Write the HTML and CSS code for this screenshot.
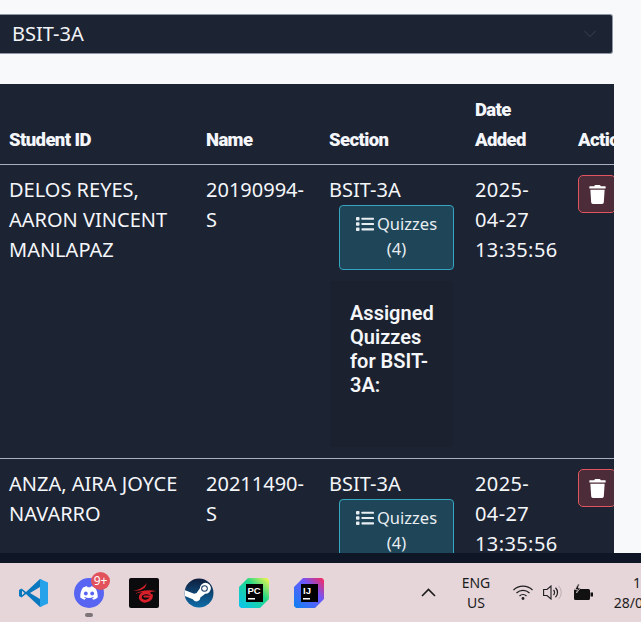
FILE: index.html
```html
<!DOCTYPE html>
<html lang="en">
<head>
  <meta charset="UTF-8">
  <meta name="viewport" content="width=device-width, initial-scale=1.0">
  <title>Students</title>
  <link rel="stylesheet" href="styles.css">
</head>
<body>
  <main class="page">
    <div class="section-select">
      <span>BSIT-3A</span>
      <svg class="chevron" width="14" height="14" viewBox="0 0 16 16"><path d="M2 5l6 6 6-6" fill="none" stroke="currentColor" stroke-width="1.6" stroke-linecap="round" stroke-linejoin="round"/></svg>
    </div>
    <div class="table-wrap">
      <table class="students">
        <colgroup>
          <col class="col-id"><col class="col-name"><col class="col-section"><col class="col-date"><col class="col-action">
        </colgroup>
        <thead>
          <tr>
            <th>Student ID</th>
            <th>Name</th>
            <th>Section</th>
            <th>Date Added</th>
            <th>Actions</th>
          </tr>
        </thead>
        <tbody>
          <tr>
            <td>DELOS REYES, AARON VINCENT MANLAPAZ</td>
            <td>20190994-S</td>
            <td>
              BSIT-3A
              <button class="quiz-btn">
                <svg class="list-icon" viewBox="0 0 18 16"><use href="#list"/></svg>Quizzes (4)
              </button>
              <div class="quiz-panel">
                <h5>Assigned Quizzes for BSIT-3A:</h5>
              </div>
            </td>
            <td class="date">2025-04-27 13:35:56</td>
            <td>
              <button class="del-btn"><svg class="trash-icon" viewBox="0 0 448 512"><use href="#trash"/></svg></button>
            </td>
          </tr>
          <tr>
            <td>ANZA, AIRA JOYCE NAVARRO</td>
            <td>20211490-S</td>
            <td>
              BSIT-3A
              <button class="quiz-btn">
                <svg class="list-icon" viewBox="0 0 18 16"><use href="#list"/></svg>Quizzes (4)
              </button>
            </td>
            <td class="date">2025-04-27 13:35:56</td>
            <td>
              <button class="del-btn"><svg class="trash-icon" viewBox="0 0 448 512"><use href="#trash"/></svg></button>
            </td>
          </tr>
        </tbody>
      </table>
    </div>
  </main>

  <div class="strip"></div>

  <footer class="taskbar">
    <div class="apps">
      <svg width="30" height="30" viewBox="0 0 30 30">
        <path d="M21 1L7 14 2.500 10.500 0 12v6l2.500 1.500L7 16l14 13 3-1.500V2.500z" fill="#0a78bf"/>
        <path d="M21 9L11 15l10 6z" fill="#e6d6da"/>
        <path d="M3 12.800L5.500 15 3 17.200z" fill="#e6d6da"/>
        <path d="M21 1l8 3.500v21L21 29z" fill="#25a2ea"/>
      </svg>
      <div class="discord">
        <svg width="30" height="30" viewBox="0 0 30 30">
          <circle cx="15" cy="15" r="15" fill="#5865f2"/>
          <path d="M9 9.500c2-1 3.500-1.300 4-1.300l.5 1c1-.1 2-.1 3 0l.5-1c.5 0 2 .3 4 1.300 2 3 3 6.500 2.700 10-1.500 1.200-3 1.900-4.500 2.300l-1-1.600 1.600-.8-.4-.3c-2.900 1.300-5.900 1.300-8.800 0l-.4.3 1.600.8-1 1.600c-1.500-.4-3-1.100-4.500-2.300-.3-3.500.7-7 2.700-10z" fill="#fff"/>
          <circle cx="11.800" cy="15.500" r="1.900" fill="#5865f2"/>
          <circle cx="18.200" cy="15.500" r="1.900" fill="#5865f2"/>
        </svg>
        <span class="badge">9+</span>
        <span class="running"></span>
      </div>
      <svg width="30" height="30" viewBox="0 0 30 30">
        <rect width="30" height="30" rx="2" fill="#0b0b0d"/>
        <path d="M4 12.500c5 0 9-2 14-7.500l-2 4.500c-3 2.500-7 4-12 3z" fill="#d9202a"/>
        <path d="M6 16c5-3.500 13-4.500 21-3-3 .6-5 1-7 1.300-5-.6-10 .2-14 1.700z" fill="#d9202a"/>
        <g fill="none" stroke="#d9202a" stroke-linecap="round">
          <path d="M20.500 15.500c-3-1.500-8-.5-9 2.500-1 3.500 2.500 6 6 5 3-.8 5-3 5-5.500" stroke-width="2.800"/>
          <path d="M15.500 18.500h5" stroke-width="2.200"/>
        </g>
      </svg>
      <svg width="30" height="30" viewBox="0 0 30 30">
        <defs>
          <linearGradient id="steamBg" x1="0" y1="0" x2="0" y2="1">
            <stop offset="0" stop-color="#0f1d3c"/>
            <stop offset="1" stop-color="#0e6da8"/>
          </linearGradient>
        </defs>
        <circle cx="15" cy="15" r="14.500" fill="url(#steamBg)"/>
        <path d="M.8 18l8 3.300a4 4 0 0 0 7.500-1.800l5-3.700a5.500 5.500 0 1 0-5.400-5.500l-3.500 5a4 4 0 0 0-2.300.4L.5 12z" fill="#fff"/>
        <circle cx="20.500" cy="10.500" r="3.300" fill="#1a3a63"/>
        <circle cx="20.500" cy="10.500" r="2.300" fill="#fff"/>
      </svg>
      <svg width="30" height="30" viewBox="0 0 30 30">
        <defs>
          <linearGradient id="pcBg" x1="0" y1="1" x2="1" y2="0">
            <stop offset="0" stop-color="#07c3f2"/>
            <stop offset="0.6" stop-color="#21d789"/>
            <stop offset="1" stop-color="#fcf84a"/>
          </linearGradient>
        </defs>
        <path d="M9 0h19l2 2v19l-9 9H2l-2-2V9z" fill="url(#pcBg)"/>
        <rect x="7" y="6" width="17" height="18" fill="#000"/>
        <text class="ide-text" x="8.500" y="15.500">PC</text>
        <rect x="9" y="20" width="7" height="1.500" fill="#fff"/>
      </svg>
      <svg width="30" height="30" viewBox="0 0 30 30">
        <defs>
          <linearGradient id="ijBg" x1="0" y1="1" x2="1" y2="0">
            <stop offset="0" stop-color="#0b82f0"/>
            <stop offset="0.6" stop-color="#6b57ff"/>
            <stop offset="1" stop-color="#fe2857"/>
          </linearGradient>
        </defs>
        <path d="M9 0h19l2 2v19l-9 9H2l-2-2V9z" fill="url(#ijBg)"/>
        <rect x="7" y="6" width="17" height="18" fill="#000"/>
        <text class="ide-text" x="9" y="15.500">IJ</text>
        <rect x="9" y="20" width="7" height="1.500" fill="#fff"/>
      </svg>
    </div>
    <div class="tray">
      <svg class="tray-chevron" width="15" height="9" viewBox="0 0 15 9"><path d="M1 8l6.500-6.500L14 8" fill="none" stroke="#1c1c1c" stroke-width="1.600"/></svg>
      <div class="lang">ENG<br>US</div>
      <svg class="wifi" width="20" height="15" viewBox="0 0 20 15">
        <g fill="none" stroke="#1e1e1e" stroke-width="1.200">
          <path d="M.5 5a13.800 13.800 0 0 1 19 0"/>
          <path d="M3.500 8a9.500 9.500 0 0 1 13 0"/>
          <path d="M6.500 11a5.200 5.200 0 0 1 7 0"/>
        </g>
        <circle cx="10" cy="13.500" r="1.400" fill="#1e1e1e"/>
      </svg>
      <svg class="volume" width="20" height="15" viewBox="0 0 20 15">
        <path d="M.6 4.500h3.400L8 1v13l-4-3.500H.6z" fill="none" stroke="#1e1e1e" stroke-width="1.100"/>
        <path d="M10.500 5a3.500 3.500 0 0 1 0 5M12.500 2.800a6.500 6.500 0 0 1 0 9.400" fill="none" stroke="#1e1e1e" stroke-width="1.200"/>
        <path d="M15.500.8a9.500 9.500 0 0 1 0 13.400" fill="none" stroke="#b9adb1" stroke-width="1"/>
      </svg>
      <svg class="battery" width="20" height="17" viewBox="0 0 20 17">
        <path d="M2.500 5h13A1.500 1.500 0 0 1 17 6.500v8a1.500 1.500 0 0 1-1.500 1.500h-13A1.500 1.500 0 0 1 1 14.500v-8A1.500 1.500 0 0 1 2.500 5z" fill="#111"/>
        <rect x="17.500" y="8.500" width="2.500" height="4" fill="#111"/>
        <path d="M5 0L2 5.500h2.500L3.500 9 7.500 4H5.200L6.500 0z" fill="#111" stroke="#e6d6da" stroke-width=".7"/>
      </svg>
      <div class="clock">13:40<br>28/04/2025</div>
    </div>
  </footer>

  <svg class="sprite" width="0" height="0">
    <symbol id="list" viewBox="0 0 18 16">
      <rect x="0" y="1" width="3.500" height="3.500" rx=".8"/>
      <rect x="0" y="6.300" width="3.500" height="3.500" rx=".8"/>
      <rect x="0" y="11.600" width="3.500" height="3.500" rx=".8"/>
      <rect x="5.500" y="1.700" width="12.500" height="2.100" rx=".6"/>
      <rect x="5.500" y="7" width="12.500" height="2.100" rx=".6"/>
      <rect x="5.500" y="12.300" width="12.500" height="2.100" rx=".6"/>
    </symbol>
    <symbol id="trash" viewBox="0 0 448 512">
      <path d="M432 32H312l-9.400-18.700A24 24 0 0 0 281.100 0H166.800a23.720 23.720 0 0 0-21.400 13.300L136 32H16A16 16 0 0 0 0 48v32a16 16 0 0 0 16 16h416a16 16 0 0 0 16-16V48a16 16 0 0 0-16-16zM53.200 467a48 48 0 0 0 47.900 45h245.800a48 48 0 0 0 47.900-45L416 128H32z"/>
    </symbol>
  </svg>
</body>
</html>
```

FILE: styles.css
```css
* {
  box-sizing: border-box;
}
body {
  margin: 0;
  height: 622px;
  display: flex;
  flex-direction: column;
  overflow: hidden;
  background: #f8f9fb;
  font-family: "Noto Sans", Roboto, sans-serif;
}
.page {
  height: 553px;
  padding-top: 14px;
  overflow: hidden;
}
.section-select {
  width: 613px;
  height: 40px;
  margin-bottom: 30px;
  padding: 0 15px 1px 12px;
  display: flex;
  align-items: center;
  justify-content: space-between;
  background: #1c2333;
  border: 1px solid #8f96a6;
  border-left: 0;
  border-radius: 0 3px 3px 0;
  color: #f2f4f8;
  font-size: 20px;
}
.chevron {
  color: #2f3748;
}
.table-wrap {
  width: 614px;
  overflow: hidden;
  background: #1c2333;
}
.students {
  width: 660px;
  table-layout: fixed;
  border-collapse: collapse;
  color: #f4f6fa;
  font-size: 20px;
  line-height: 30px;
}
.col-id { width: 197px; }
.col-name { width: 123px; }
.col-section { width: 146px; }
.col-date { width: 103px; }
.col-action { width: 91px; }
.students th {
  padding: 11px 9px 9px;
  text-align: left;
  vertical-align: bottom;
  font-family: Roboto, sans-serif;
  font-size: 18.5px;
  font-weight: 900;
  letter-spacing: -0.6px;
  border-bottom: 1px solid #a9afbd;
}
.students td {
  padding: 10px 9px;
  vertical-align: top;
  border-bottom: 1px solid #a9afbd;
}
.students td.date {
  padding-right: 11px;
  letter-spacing: 0.4px;
}
.quiz-btn {
  display: block;
  width: 115px;
  margin-left: 10px;
  padding: 5px 10px 8px;
  background: #1f4558;
  border: 1px solid #35a5c2;
  border-radius: 4px;
  color: #e9eef2;
  font-family: inherit;
  font-size: 16.5px;
  line-height: 25px;
  text-align: center;
}
.list-icon {
  width: 18px;
  height: 16px;
  margin-right: 3px;
  vertical-align: -2px;
  fill: #e9eef2;
}
.quiz-panel {
  width: 123px;
  height: 166px;
  margin: 11px 0 1px 1px;
  padding: 20px;
  background: #1b212f;
  border-radius: 4px;
}
.quiz-panel h5 {
  margin: 0;
  font-family: Roboto, sans-serif;
  font-size: 20px;
  font-weight: 600;
  line-height: 24px;
}
.del-btn {
  width: 38px;
  height: 38px;
  padding: 0;
  display: flex;
  align-items: center;
  justify-content: center;
  background: #4c2c39;
  border: 1px solid #e0555f;
  border-radius: 5px;
}
.trash-icon {
  width: 17px;
  height: 19px;
  fill: #fff;
}
.strip {
  height: 10px;
  background: #0f1626;
}
.taskbar {
  flex: 1;
  display: flex;
  align-items: center;
  justify-content: space-between;
  background: #e6d6da;
  color: #1c1c1c;
  font-size: 14px;
}
.apps {
  display: flex;
  align-items: center;
  gap: 25px;
  padding-left: 19px;
}
.discord {
  position: relative;
  height: 30px;
}
.badge {
  position: absolute;
  top: -6px;
  left: 17px;
  width: 19px;
  height: 18px;
  border-radius: 50%;
  background: #e2525c;
  color: #fff;
  font-size: 12px;
  line-height: 18px;
  text-align: center;
}
.running {
  position: absolute;
  left: 11px;
  top: 35px;
  width: 8px;
  height: 4px;
  border-radius: 2px;
  background: #7d7578;
}
.ide-text {
  fill: #fff;
  font-family: "Liberation Sans", sans-serif;
  font-size: 9.5px;
  font-weight: 700;
}
.tray {
  display: flex;
  align-items: center;
  flex: none;
  width: 220px;
  overflow: hidden;
}
.tray svg {
  flex: none;
}
.lang {
  flex: none;
  width: 40px;
  margin-left: 20px;
  line-height: 20px;
  text-align: center;
}
.wifi {
  margin-left: 17px;
}
.volume {
  margin-left: 10px;
}
.battery {
  margin-left: 10px;
}
.clock {
  flex: none;
  width: 76px;
  margin-left: 20px;
  line-height: 20px;
  text-align: center;
}
.sprite {
  position: absolute;
}
```
